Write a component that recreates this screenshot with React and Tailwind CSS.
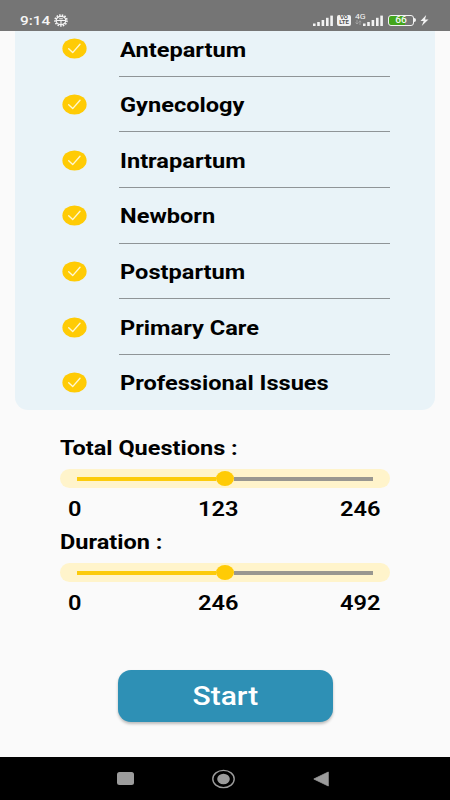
import React from "react";

const topics = ["Antepartum", "Gynecology", "Intrapartum", "Newborn", "Postpartum", "Primary Care", "Professional Issues"];

function Signal() {
  return (
    <svg width="20" height="11" viewBox="0 0 20 11" fill="#f2f2f2">
      <rect x="0" y="8.5" width="2.6" height="2.5" />
      <rect x="4.2" y="7" width="2.6" height="4" />
      <rect x="8.6" y="5" width="2.6" height="6" />
      <rect x="13" y="2.8" width="2.6" height="8.2" />
      <rect x="17.3" y="0.6" width="2.6" height="10.4" />
    </svg>
  );
}

function StatusBar() {
  return (
    <header className="relative z-10 flex h-[31px] shrink-0 items-start bg-[#757575] pt-[13px] pl-5 text-[#f5f5f5]">
      <span className="w-[34px] text-[13px] leading-[15px] font-medium">
        <span className="inline-block origin-left scale-x-[1.18]">9:14</span>
      </span>
      <svg className="mt-px" width="14" height="13" viewBox="0 0 14 13" fill="none" stroke="#f5f5f5">
        <ellipse cx="7" cy="6.5" rx="6" ry="5.4" strokeWidth="1.6" strokeDasharray="1.5 1.2" />
        <ellipse cx="7" cy="6.5" rx="4.8" ry="4.2" strokeWidth="1.2" />
        <path d="M2.5 6.5h9M7 6.5v3.5M5.2 4.8h3.6" strokeWidth="1.1" />
      </svg>
      <div className="ml-[245px] flex items-start">
        <div className="mt-[1.5px]"><Signal /></div>
        <div className="mt-[2px] ml-[4px] h-[10.5px] w-[14px] rounded-[2px] bg-[#f2f2f2] text-center text-[5px] leading-[5px] font-bold text-[#555555]">
          <div className="scale-x-[1.2]">VO</div>
          <div className="scale-x-[1.2]">LTE</div>
        </div>
        <div className="ml-[4px] flex h-[13px] w-[28px] justify-between">
          <div className="w-[8px]">
            <div className="h-[7px] origin-left scale-x-[1.15] text-[7.5px] leading-[8px] whitespace-nowrap">4G</div>
            <svg width="7" height="5" viewBox="0 0 7 5" fill="none" stroke="#a5a5a5" strokeWidth=".9">
              <path d="M2 0v4M.5 2.6 2 4l1.5-1.4M5 5V1M3.7 2 5 .8 6.3 2" />
            </svg>
          </div>
          <div className="-ml-[2px] mt-[1.5px]"><Signal /></div>
        </div>
        <div className="mt-[2px] ml-[4.5px] flex h-[10.5px] w-[26px] overflow-hidden rounded-[3px] border border-[#f2f2f2] bg-linear-to-r from-[#43a51b] from-66% to-[#757575] to-66% text-[8.5px] leading-[9px] font-medium">
          <span className="w-full scale-x-[1.2] text-center">66</span>
        </div>
        <div className="mt-[5px] ml-[0.5px] h-[4px] w-[1.5px] rounded-r bg-[#f2f2f2]" />
        <svg className="mt-[2px] ml-[4px]" width="9" height="11" viewBox="0 0 9 11" fill="#f2f2f2">
          <path d="M6.2 0 .5 6.1h3.2L1.7 11l6.8-6.4H5z" />
        </svg>
      </div>
    </header>
  );
}

function Check() {
  return (
    <svg className="shrink-0" width="25" height="21" viewBox="0 0 25 21" fill="none">
      <ellipse cx="12.5" cy="10.5" rx="12.1" ry="10.1" fill="#ffcb05" />
      <path d="M6.7 10.8 10.7 14.6 18 6.2" stroke="#fff7d0" strokeWidth="1.4" strokeLinecap="round" strokeLinejoin="round" />
    </svg>
  );
}

function Range({ label, middle, end }) {
  return (
    <section className="h-[94px]">
      <h2 className="h-[34px] origin-left scale-x-[1.205] pt-[2px] text-[19.5px] leading-[24px] font-bold whitespace-nowrap">{label}</h2>
      <div className="flex h-[19px] items-center rounded-[12px] bg-[#fff4cb] pr-[17px] pl-[16.5px]">
        <div className="h-[4px] w-[139.5px] shrink-0 bg-[#fccb0b]" />
        <div className="h-[15px] w-[18px] shrink-0 rounded-[50%] bg-[#ffcb05]" />
        <div className="h-[4px] flex-1 bg-[#999790]" />
      </div>
      <div className="mt-[9px] flex text-[20px] leading-[24px] font-semibold">
        <span className="w-[30px] text-center"><span className="inline-block scale-x-[1.18]">0</span></span>
        <span className="ml-[99px] w-[60px] text-center"><span className="inline-block scale-x-[1.18]">{middle}</span></span>
        <span className="ml-[82.5px] w-[60px] text-center"><span className="inline-block scale-x-[1.18]">{end}</span></span>
      </div>
    </section>
  );
}

export default function App() {
  return (
    <div className="flex h-[800px] w-[450px] flex-col overflow-hidden bg-[#fafafa] font-['Roboto',sans-serif] text-black">
      <StatusBar />
      <main className="flex min-h-0 flex-1 flex-col">
        <div className="mx-[15px] h-[378.5px] shrink-0 overflow-hidden rounded-b-[13px] bg-[#e9f3f8]">
          <ul className="-mt-[10px] pr-[45px] pl-[47px]">
            {topics.map((topic) => (
              <li key={topic} className="group flex h-[55.65px] items-center">
                <Check />
                <div className="ml-[32px] flex h-full flex-1 items-center border-b border-[#8f9497] pt-[4.5px] group-last:border-transparent">
                  <span className="ml-[1px] origin-left scale-x-[1.21] text-[19.5px] leading-[24px] font-bold whitespace-nowrap">{topic}</span>
                </div>
              </li>
            ))}
          </ul>
        </div>
        <div className="mt-[25.5px] px-[60px]">
          <Range label="Total Questions :" middle="123" end="246" />
          <Range label="Duration :" middle="246" end="492" />
        </div>
        <button className="mr-auto ml-[117.5px] mt-[46.5px] h-[52px] w-[215px] shrink-0 rounded-[13px] bg-[#2e90b5] pt-[3px] text-[25px] font-medium text-white shadow-[0_2px_3px_rgba(0,0,0,0.25)]">
          <span className="inline-block scale-x-[1.2]">Start</span>
        </button>
      </main>
      <nav className="flex h-[43px] shrink-0 items-center bg-black pl-[116.5px]">
        <div className="h-[13px] w-[17px] rounded-[2.5px] bg-[#9c9c9c]" />
        <svg className="ml-[77.5px]" width="25" height="20" viewBox="0 0 25 20">
          <ellipse cx="12.5" cy="10" rx="10.7" ry="8.6" fill="none" stroke="#9c9c9c" strokeWidth="1.4" />
          <ellipse cx="12.5" cy="10" rx="6.3" ry="5.2" fill="#9c9c9c" />
        </svg>
        <svg className="ml-[77px]" width="16" height="16" viewBox="0 0 16 16">
          <path d="M.8 8 15.3 1v14z" fill="#9c9c9c" stroke="#9c9c9c" strokeWidth=".8" strokeLinejoin="round" />
        </svg>
      </nav>
    </div>
  );
}
